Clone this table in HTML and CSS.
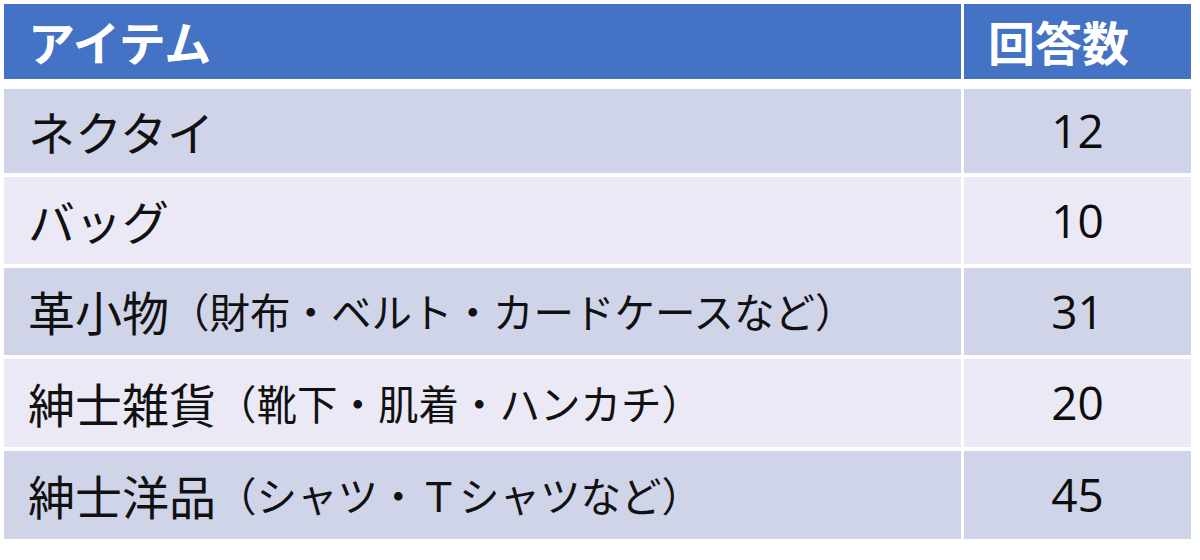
FILE: index.html
```html
<!DOCTYPE html>
<html lang="ja">
<head>
<meta charset="utf-8">
<link rel="stylesheet" href="styles.css">
</head>
<body>
<div class="table">
  <div class="cell head item">アイテム</div>
  <div class="cell head num-head">回答数</div>

  <div class="cell odd item">ネクタイ</div>
  <div class="cell odd num">12</div>

  <div class="cell even item">バッグ</div>
  <div class="cell even num">10</div>

  <div class="cell odd item">革小物<span class="sub">（財布・ベルト・カードケースなど）</span></div>
  <div class="cell odd num">31</div>

  <div class="cell even item">紳士雑貨<span class="sub">（靴下・肌着・ハンカチ）</span></div>
  <div class="cell even num">20</div>

  <div class="cell odd item">紳士洋品<span class="sub">（シャツ・Ｔシャツなど）</span></div>
  <div class="cell odd num">45</div>
</div>
</body>
</html>
```

FILE: styles.css
```css
html, body {
  margin: 0;
  padding: 0;
  background: #ffffff;
}

body {
  width: 1200px;
  height: 560px;
  overflow: hidden;
  font-family: "Noto Sans CJK JP", "Noto Sans", sans-serif;
}

.table {
  margin: 4px 0 0 4px;
  display: grid;
  grid-template-columns: 957px 227px;
  grid-template-rows: 81px 84px 87px 87px 88px 88px;
  column-gap: 3px;
  row-gap: 4px;
}

.cell {
  display: flex;
  align-items: center;
  color: #111111;
  box-sizing: border-box;
}

.head {
  background: #4472c4;
  color: #ffffff;
  font-weight: 700;
  font-size: 47px;
  margin-bottom: 6px;
  padding-bottom: 2px;
}

.num-head {
  padding-left: 24px;
}

.odd {
  background: #cfd4e9;
}

.even {
  background: #ebe9f5;
}

.item {
  padding-left: 24px;
  font-size: 47px;
  padding-bottom: 2px;
}

.sub {
  font-size: 40.5px;
}

.num {
  justify-content: center;
  font-family: "Open Sans", "Liberation Sans", sans-serif;
  font-size: 46px;
  padding-bottom: 2px;
  color: #0d0d0d;
}
```
